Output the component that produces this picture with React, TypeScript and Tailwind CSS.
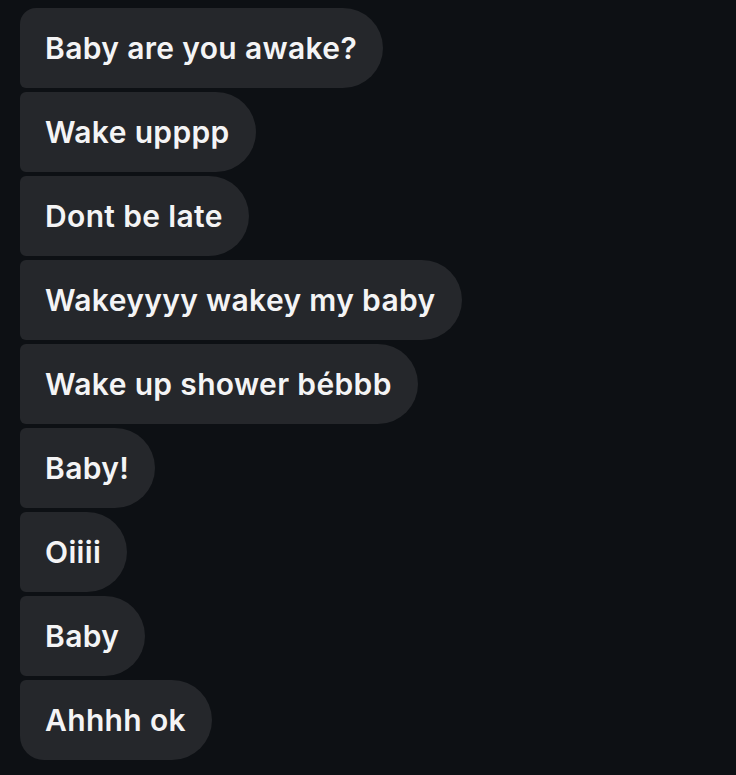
const messages = [
  "Baby are you awake?",
  "Wake upppp",
  "Dont be late",
  "Wakeyyyy wakey my baby",
  "Wake up shower bébbb",
  "Baby!",
  "Oiiii",
  "Baby",
  "Ahhhh ok",
];

export default function App() {
  return (
    <div className="min-h-screen w-full bg-[#0d1014] pt-2 pl-5 font-['Inter','Noto_Sans',sans-serif]">
      <div className="flex flex-col items-start gap-1">
        {messages.map((text, i) => {
          const first = i === 0;
          const last = i === messages.length - 1;
          return (
            <div
              key={i}
              className={`flex h-[80px] items-center bg-[#25272b] pl-[25px] pr-[26px] text-[30px] font-semibold tracking-[0.35px] text-[#f4f4f5] rounded-r-[40px] ${
                first ? "rounded-tl-[16px]" : "rounded-tl-[6px]"
              } ${last ? "rounded-bl-[24px]" : "rounded-bl-[6px]"}`}
            >
              {text}
            </div>
          );
        })}
      </div>
    </div>
  );
}
